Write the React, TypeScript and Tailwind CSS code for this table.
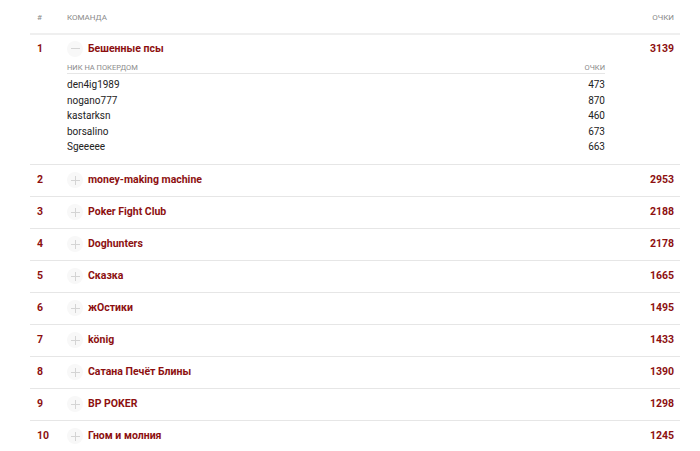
import React from 'react';

interface Player {
  nick: string;
  points: number;
}

interface Team {
  rank: number;
  name: string;
  points: number;
  players?: Player[];
}

const teams: Team[] = [
  {
    rank: 1,
    name: 'Бешенные псы',
    points: 3139,
    players: [
      { nick: 'den4ig1989', points: 473 },
      { nick: 'nogano777', points: 870 },
      { nick: 'kastarksn', points: 460 },
      { nick: 'borsalino', points: 673 },
      { nick: 'Sgeeeee', points: 663 },
    ],
  },
  { rank: 2, name: 'money-making machine', points: 2953 },
  { rank: 3, name: 'Poker Fight Club', points: 2188 },
  { rank: 4, name: 'Doghunters', points: 2178 },
  { rank: 5, name: 'Сказка', points: 1665 },
  { rank: 6, name: 'жОстики', points: 1495 },
  { rank: 7, name: 'könig', points: 1433 },
  { rank: 8, name: 'Сатана Печёт Блины', points: 1390 },
  { rank: 9, name: 'BP POKER', points: 1298 },
  { rank: 10, name: 'Гном и молния', points: 1245 },
];

const Toggle: React.FC<{ open: boolean }> = ({ open }) => (
  <span className="w-[16px] h-[16px] rounded-full bg-[#f8f8f8] flex items-center justify-center mr-[5px]">
    <svg width="9" height="9" viewBox="0 0 9 9">
      <path d="M0 4.5H9" stroke="#d4d4d4" strokeWidth="1" />
      {!open && <path d="M4.5 0V9" stroke="#d4d4d4" strokeWidth="1" />}
    </svg>
  </span>
);

const App: React.FC = () => {
  return (
    <div className="w-[700px] h-[451px] bg-white overflow-hidden pl-[30px] pr-[20px] font-['Roboto',sans-serif]">
      {/* Header */}
      <div className="flex items-center h-[35px] pt-[3px] border-b-2 border-[#efefef] text-[8px] uppercase text-[#8a8a8a]">
        <span className="w-[37px] pl-[7px]">#</span>
        <span className="flex-1">Команда</span>
        <span className="pr-[6px]">Очки</span>
      </div>

      {teams.map((team) => (
        <div key={team.rank} className="border-b border-[#e6e6e6]">
          <div className={`flex items-center ${team.players ? 'h-[27px]' : 'h-[31px]'}`}>
            <span className="w-[37px] pl-[7px] text-[10.5px] font-bold text-[#8d1010]">{team.rank}</span>
            <Toggle open={!!team.players} />
            <span className="flex-1 text-[10.5px] font-bold text-[#8d1010]">{team.name}</span>
            <span className="pr-[6px] text-[10.5px] font-bold text-[#8d1010]">{team.points}</span>
          </div>

          {team.players && (
            <div className="ml-[37px] mr-[75px] pb-[9px]">
              <div className="flex items-center h-[12px] border-b border-[#e6e6e6] text-[7.5px] uppercase text-[#8a8a8a]">
                <span className="flex-1">Ник на Покердом</span>
                <span>Очки</span>
              </div>
              <div className="pt-[3px]">
                {team.players.map((p) => (
                  <div key={p.nick} className="flex items-center h-[15.5px] text-[10px] text-[#222]">
                    <span className="flex-1">{p.nick}</span>
                    <span>{p.points}</span>
                  </div>
                ))}
              </div>
            </div>
          )}
        </div>
      ))}
    </div>
  );
};

export default App;
